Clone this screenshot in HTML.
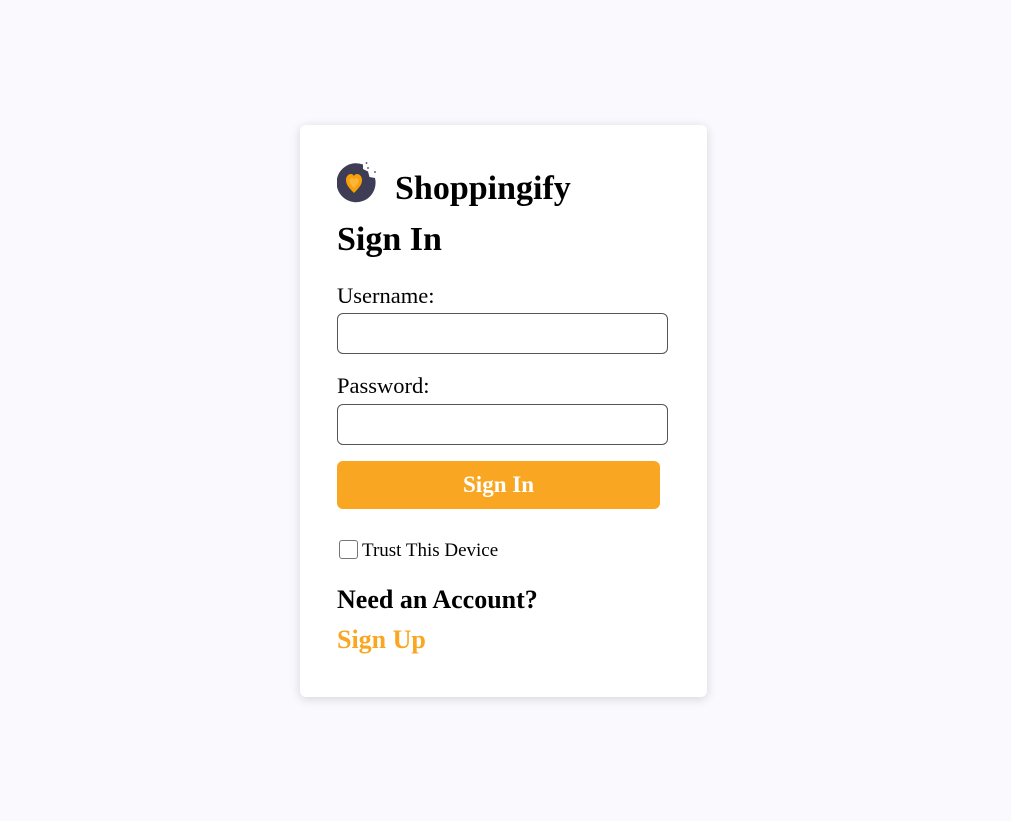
<!DOCTYPE html>
<html><head><meta charset="utf-8"><style>
html,body{margin:0;width:1011px;height:821px;background:#f9f9fe;font-family:"Liberation Serif",serif;overflow:hidden}
.card{position:absolute;left:300px;top:125px;width:407px;height:572px;background:#fff;border-radius:6px;box-shadow:0 2px 10px rgba(0,0,0,0.15)}
.a{position:absolute;white-space:nowrap;color:#000}
.inp{position:absolute;left:37px;width:329px;height:39px;border:1px solid #555;border-radius:6px;background:#fff}
</style></head><body>
<div class="card">
<svg class="a" style="left:37px;top:37px" width="42" height="42" viewBox="0 0 42 42">
<path d="M38.5 19 A19.5 19.5 0 1 1 26 2.5 L26 7 L31 9.5 L32.5 15 L38 16 Z" fill="#3f3d56"/>
<path d="M17 31 C11 25 9 22 9 18 C9 15 11 12 14 12 C15.5 12 16.5 13 17 14 C17.5 13 18.5 12 20 12 C23 12 25 15 25 18 C25 22 23 25 17 31 Z" fill="#f9a109"/>
<path d="M17 26 C14 23 12.5 21 12.5 19 C12.5 17 14 16 15 16 C16 16 17 17 17 18 C17 17 18 16 19 16 C20 16 21.5 17 21.5 19 C21.5 21 20 23 17 26 Z" fill="#fbb53a"/>
<circle cx="29.5" cy="1" r="0.9" fill="#3f3d56"/><circle cx="31" cy="6" r="0.9" fill="#3f3d56"/><circle cx="38" cy="10" r="0.9" fill="#3f3d56"/>
</svg>
<div class="a" style="left:95px;top:45px;font-size:34px;font-weight:bold">Shoppingify</div>
<div class="a" style="left:37px;top:96px;font-size:34px;font-weight:bold">Sign In</div>
<div class="a" style="left:37px;top:158px;font-size:22.5px">Username:</div>
<div class="inp" style="top:188px"></div>
<div class="a" style="left:37px;top:248px;font-size:22.5px">Password:</div>
<div class="inp" style="top:279px"></div>
<div class="a" style="left:37px;top:336px;width:323px;height:48px;background:#f9a722;border-radius:6px;color:#fff;font-size:23px;font-weight:bold;text-align:center;line-height:48px">Sign In</div>
<div class="a" style="left:39px;top:415px;width:17px;height:17px;border:1px solid #767676;border-radius:3px;background:#fff"></div>
<div class="a" style="left:62px;top:415px;font-size:19px">Trust This Device</div>
<div class="a" style="left:37px;top:460px;font-size:26px;font-weight:bold">Need an Account?</div>
<div class="a" style="left:37px;top:500px;font-size:26px;font-weight:bold;color:#f9a722">Sign Up</div>
</div>
</body></html>
